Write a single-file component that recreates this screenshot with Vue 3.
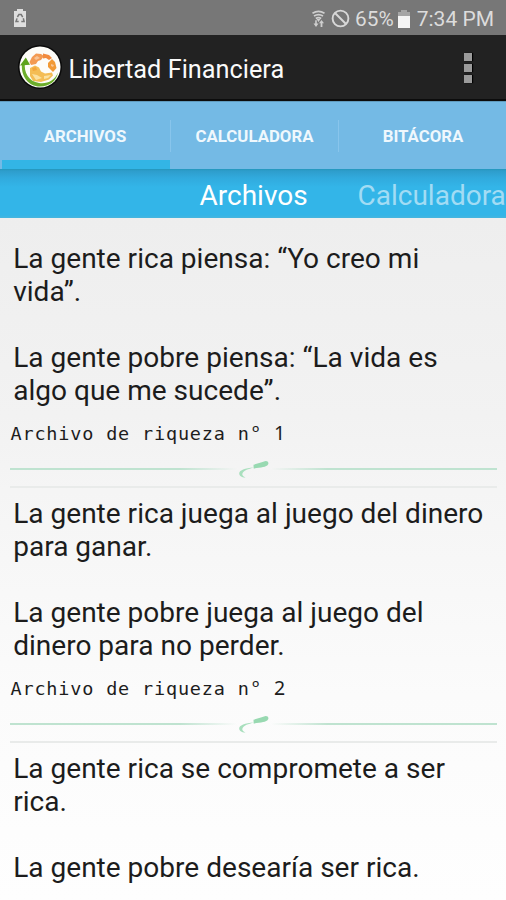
<script setup>
const tabs = ['Archivos', 'Calculadora', 'Bitácora']
const files = [
  { rich: ['La gente rica piensa: “Yo creo mi', 'vida”.'], poor: ['La gente pobre piensa: “La vida es', 'algo que me sucede”.'], number: 1 },
  { rich: ['La gente rica juega al juego del dinero', 'para ganar.'], poor: ['La gente pobre juega al juego del', 'dinero para no perder.'], number: 2 },
  { rich: ['La gente rica se compromete a ser', 'rica.'], poor: ['La gente pobre desearía ser rica.'] },
]
</script>

<template>
  <div class="screen">
    <header class="status">
      <svg class="recycle" width="14" height="19" viewBox="0 0 14 19">
        <path d="M4 2V0h6v2h3v16H1V2z" fill="#dedede" />
        <path d="M4.400 8 5.900 5.600h2.300l1.500 2.600M10.300 9.300l.8 3.300H8.300M5.700 12.600H3l1-3.200" fill="none" stroke="#777" stroke-width="1.500" />
      </svg>
      <div class="status-right">
        <svg class="wifi" width="15" height="18" viewBox="0 0 15 18">
          <g fill="none" stroke="#cfcfcf" stroke-width="1.700">
            <path d="M1.500 3.200Q7.500-.4 13.500 3.200M3 6Q7.500 3.200 12 6M4.800 8.500Q7.500 6.900 10.200 8.500" />
          </g>
          <path d="M5.500 9h4l-2 3zM2.500 13.400h1.700v-3.200h1.600v3.200h1.700L5 17zM8 13.200 10.500 10l2.500 3.200h-1.600V17H9.600v-3.800z" fill="#cfcfcf" />
        </svg>
        <svg class="blocked" width="19" height="19" viewBox="0 0 19 19">
          <circle cx="9.5" cy="9.5" r="7.9" fill="none" stroke="#d8d8d8" stroke-width="1.9" />
          <path d="m4 4 11 11" stroke="#d8d8d8" stroke-width="1.9" />
        </svg>
        <span class="percent">65%</span>
        <svg class="battery" width="12" height="18" viewBox="0 0 12 18">
          <path d="M3 2V0h6v2h3v5H0V2z" fill="#a6a6a6" />
          <path d="M0 6h12v12H0z" fill="#f5f5f5" />
        </svg>
        <span class="clock">7:34 PM</span>
      </div>
    </header>

    <div class="appbar">
      <svg class="logo" width="44" height="44" viewBox="0 0 44 44">
        <circle cx="22" cy="22" r="22" fill="#0a0a0a" />
        <circle cx="22" cy="22" r="20.5" fill="#fdfcf8" />
        <path d="M11.500 17 14 12l4-3.500 5 .5 3 2-3 4-3 1-2 3-5 1z" fill="#f39a52" />
        <path d="m25 8.500 6 1.500 3 3-3 2-3-2-3 .5z" fill="#f28b3e" />
        <path d="m30 18 4-4 3 3 1.500 6-3.500 4-3-3-2-2z" fill="#f29a35" />
        <path d="m12 23 5-2.500 4 2 2 4 4 2 7-1 1 3-4 4-8 2.500-8-1-3-5z" fill="#f4bd55" />
        <path d="m14 29 5 1 5 3-6 2zM26 31l7-1-3 3-4 1z" fill="#fbe1a0" />
        <path d="m14 23 4-1 1 3-4 1z" fill="#f3a53b" />
        <path d="m16 13 3-2 3 2-4 2zM33 19l3 1-1 2-2-1z" fill="#f8c495" />
        <path d="M7 17C5.500 28 11 36.500 21 38c8.500 1.200 15.500-2.500 19-10.500-1.500 8.500-8.500 14-18 14C10.500 41.500 2.500 31 4 18z" fill="#6cad2b" />
        <path d="m2 20.500 5.800-8 4.200 7.200z" fill="#5ea31c" />
      </svg>
      <h1>Libertad Financiera</h1>
      <div class="overflow"><i /><i /><i /></div>
    </div>

    <nav class="tabs">
      <div v-for="(t, i) in tabs" :key="t" class="tab" :class="{ active: i === 0 }"><span>{{ t }}</span></div>
    </nav>

    <div class="pager">
      <span class="current">Archivos</span>
      <span class="next">Calculadora</span>
    </div>

    <main>
      <article v-for="(f, i) in files" :key="i">
        <p><span v-for="l in f.rich" :key="l">{{ l }}</span></p>
        <p><span v-for="l in f.poor" :key="l">{{ l }}</span></p>
        <template v-if="f.number">
          <small>Archivo de riqueza n<b>º</b> <b>{{ f.number }}</b></small>
          <div class="ornament">
            <i class="left" />
            <svg width="34" height="20" viewBox="0 0 34 20">
              <path d="M16.500 4.800C20 3.300 24 2.800 27 1.500c2.500-1.500 5.500.5 4 3-1.600 2.700-7 2.900-14.300 4z" fill="#98d9b1" />
              <path d="M17 7.500C8 8 2 10.500 2.200 13.500c.1 2 2 4 6.300 4-3-1-4-3-2.700-4.700C7 10.500 11 9 17 7.500z" fill="#a8dfbd" />
            </svg>
            <i class="right" />
          </div>
        </template>
      </article>
    </main>
  </div>
</template>

<style>
body { margin: 0; }
</style>

<style scoped>
.screen {
  width: 506px;
  height: 900px;
  overflow: hidden;
  display: flex;
  flex-direction: column;
  font-family: Roboto, sans-serif;
  background: #f1f1f1;
}
.status {
  height: 35px;
  flex: none;
  box-sizing: border-box;
  display: flex;
  justify-content: space-between;
  align-items: center;
  padding: 2px 12px 0 13px;
  background: #777;
  color: #dcdcdc;
  font-size: 20.8px;
}
.status-right { display: flex; align-items: center; }
.blocked { margin-left: 5px; }
.percent { margin-left: 5px; }
.battery { margin: 0 7px 0 4px; }
.clock { font-size: 21px; }
.appbar {
  height: 66px;
  flex: none;
  box-sizing: border-box;
  display: flex;
  align-items: center;
  padding: 0 34px 0 18px;
  background: #222;
  border-bottom: 2px solid #0c0c0c;
}
h1 {
  flex: 1;
  margin: 4px 0 0 6.5px;
  font-size: 25.3px;
  font-weight: 400;
  color: #fafafa;
  white-space: nowrap;
}
.overflow { display: grid; gap: 3px; padding-top: 2px; }
.overflow i { width: 8px; height: 8px; background: #9b9b9b; box-shadow: 1px 0 1px #000; }
.tabs {
  height: 68px;
  flex: none;
  display: grid;
  grid-template-columns: 171px 168px 167px;
  background: #74bae5;
  border-top: 1px solid #609bbe;
  box-sizing: border-box;
}
.tab {
  display: grid;
  grid-template: 67px / 1fr 1px;
  align-items: center;
  justify-items: center;
  color: #eff8fd;
  font-size: 16.8px;
  font-weight: 700;
  text-transform: uppercase;
  white-space: nowrap;
}
.tab::after { content: ''; width: 1px; height: 32px; background: #88c5ec; }
.tab:last-child { padding-left: 2px; }
.tab:last-child::after { background: none; }
.tab.active {
  background: linear-gradient(#33b5e5, #33b5e5) 2px 100% / 168px 9px no-repeat;
}
.pager {
  height: 49px;
  flex: none;
  box-sizing: border-box;
  display: flex;
  padding: 9px 0 0 199.500px;
  font-size: 28px;
  line-height: 36px;
  white-space: nowrap;
  color: #fff;
  background: linear-gradient(#2398bc 0, #2e9dcc 2px, #31aadd 9px, #33b5e8 18px, #33b5e8 46px, #46b5de 49px);
}
.current { flex: none; width: 158px; }
.next { color: #a2dcf4; }
main {
  flex: 1;
  padding: 24px 9px 0 10px;
  background: linear-gradient(#eee, #f2f2f2 29%, #f5f5f5 40%, #fbfbfb 70%, #fefefe);
}
article { height: 255px; display: flex; flex-direction: column; }
article:last-child { height: auto; }
p { margin: 0 0 33px 3.200px; font-size: 28.050px; line-height: 33px; color: #1c1c1c; }
p span { display: block; white-space: nowrap; }
p + p { margin-bottom: 0; }
small {
  margin: 15px 0 -2px .5px;
  font: 18.500px/24px "DejaVu Sans Mono", monospace;
  letter-spacing: .82px;
  color: #1d1d1d;
  white-space: nowrap;
}
small b {
  display: inline-block;
  width: 11.950px;
  font: 19.500px/20px "Noto Sans", sans-serif;
  letter-spacing: 0;
  text-align: center;
}
.ornament {
  height: 44px;
  display: flex;
  align-items: flex-start;
  box-sizing: border-box;
  padding-top: 15px;
  background: linear-gradient(#e9ebea, #e9ebea) 0 42px / 100% 2px no-repeat;
}
.ornament svg { margin-top: 1px; }
.ornament i { flex: 1; height: 2px; margin-top: 9px; }
.left { background: linear-gradient(90deg, #bfe3d0 75%, transparent); }
.right { background: linear-gradient(270deg, #bfe3d0 75%, transparent); }
</style>
